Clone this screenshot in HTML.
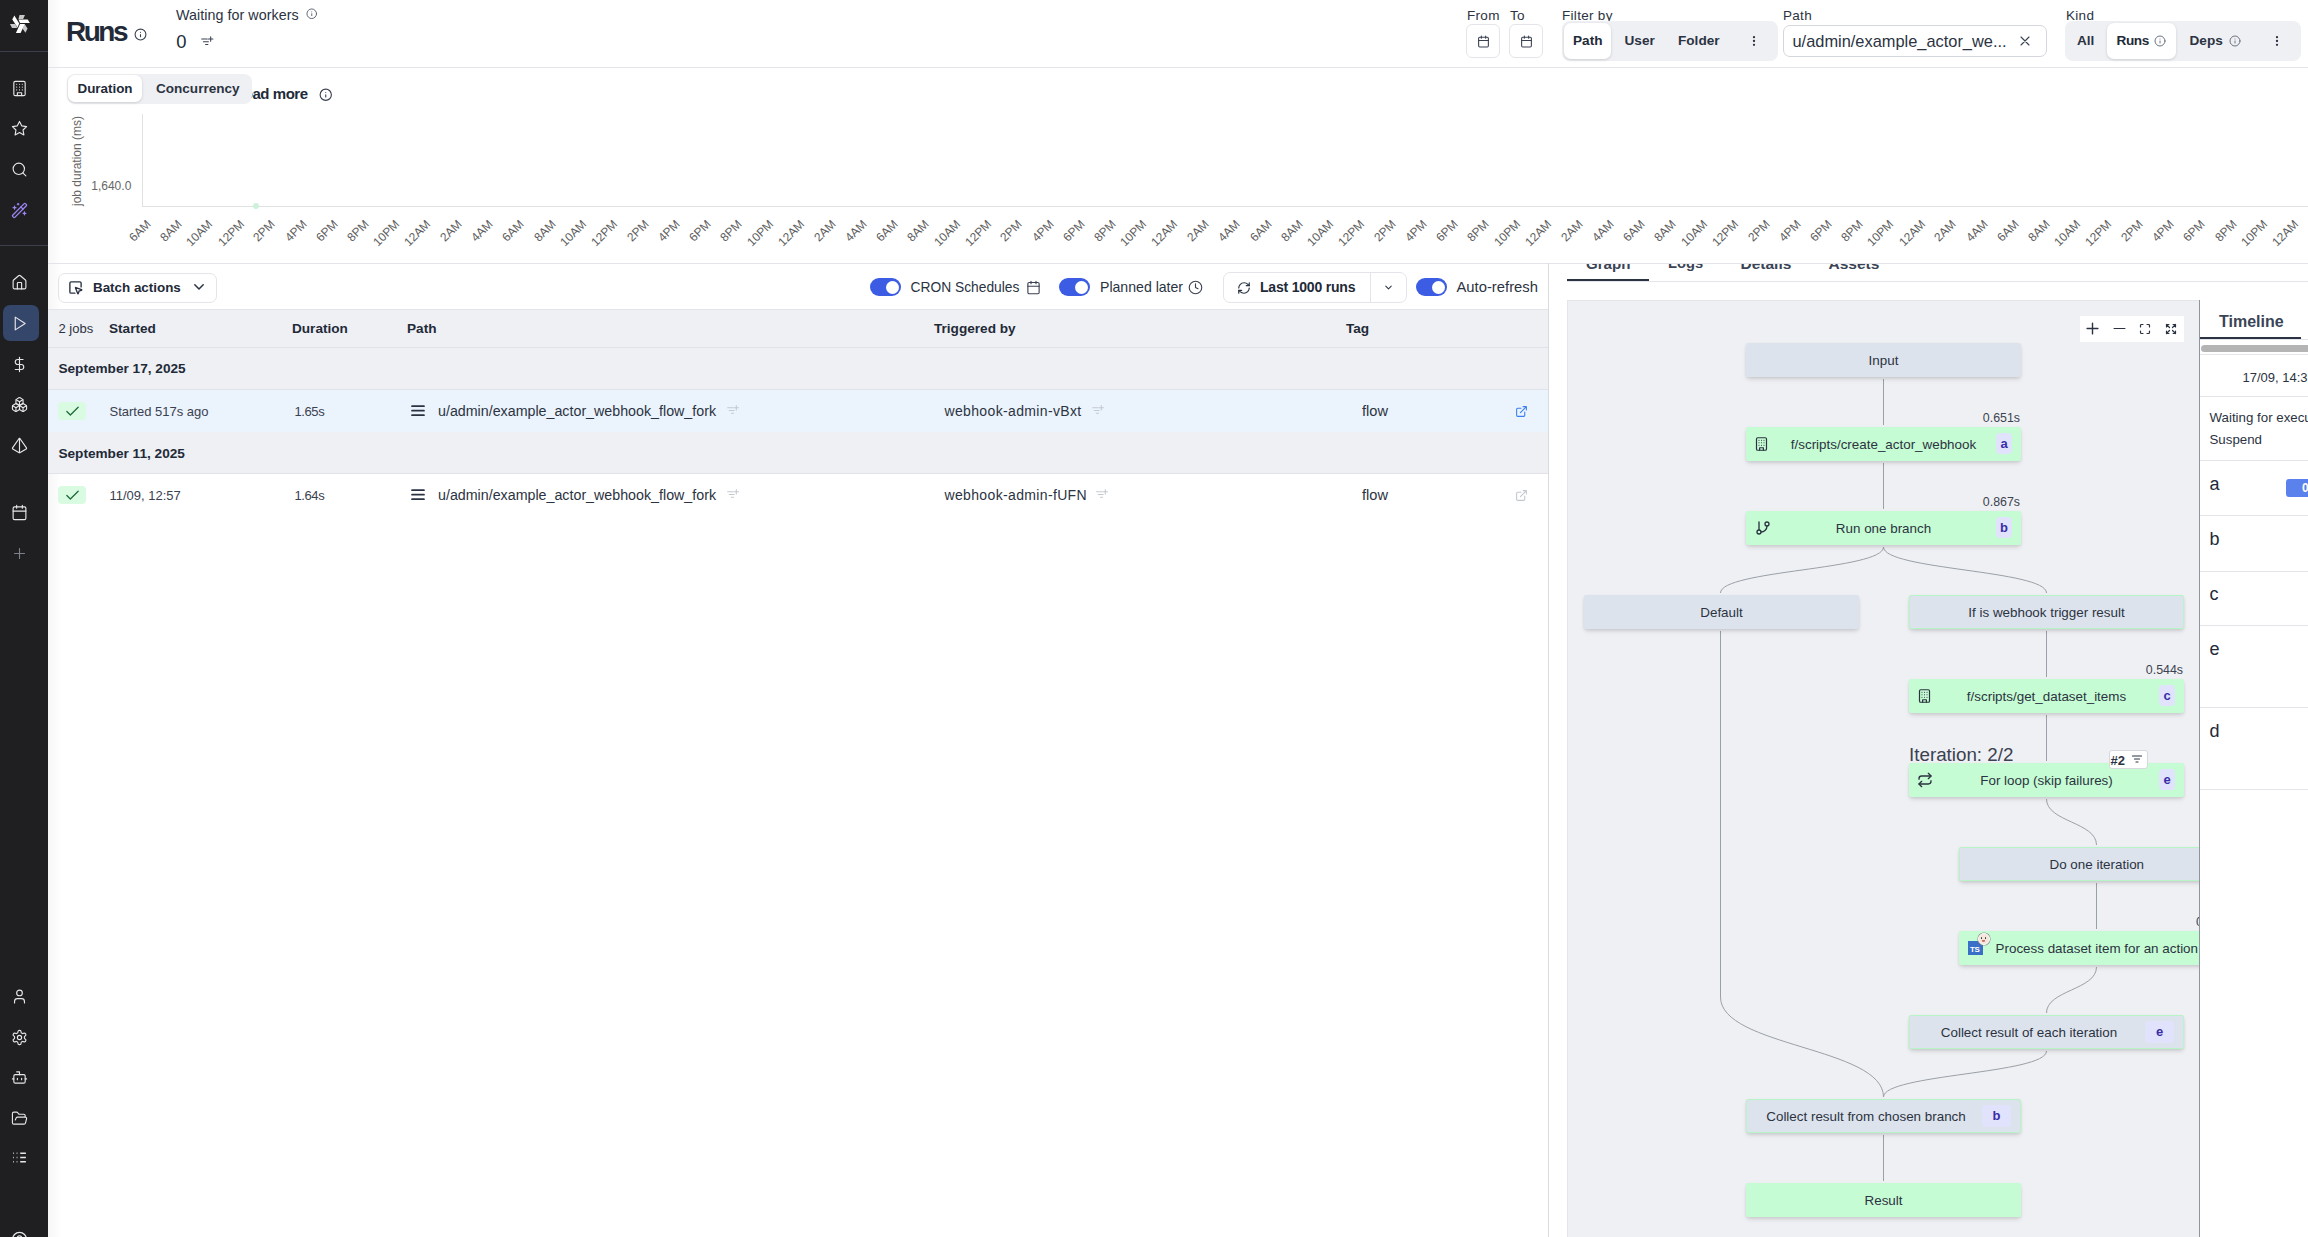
<!DOCTYPE html>
<html><head><meta charset="utf-8">
<style>
*{box-sizing:border-box;margin:0;padding:0}
html,body{width:2308px;height:1237px;overflow:hidden;background:#fff;font-family:"Liberation Sans",sans-serif;color:#2b3342}
.a{position:absolute}
.t{position:absolute;white-space:nowrap;line-height:1}
.b{font-weight:bold}
svg{display:block;overflow:visible}
.ic{position:absolute;fill:none;stroke:currentColor;stroke-width:2;stroke-linecap:round;stroke-linejoin:round}
.sbic{color:#e6e7ea}
.node{position:absolute;height:34px;width:275px;border-radius:2px;box-shadow:0 3px 5px -1px rgba(0,0,0,.13),0 1px 3px rgba(0,0,0,.07);font-size:13.4px;color:#2b3342;line-height:35px;text-align:center;white-space:nowrap;overflow:hidden}
.ng{background:#c6fcd3}
.ny{background:#dde3ec}
.nb{border:1px solid #b8f5c6;line-height:33px}
.badge{position:absolute;top:6px;width:16px;height:21px;border-radius:4px;background:#e1e3fc;color:#3a2ea6;font-weight:bold;font-size:13px;line-height:21px;text-align:center}
.dur{position:absolute;font-size:13px;color:#3c4350;white-space:nowrap;line-height:1}
.edge{fill:none;stroke:#9aa0a8;stroke-width:1}
</style></head><body>
<!-- SIDEBAR -->
<div class="a" style="left:0;top:0;width:48px;height:1237px;background:#1f1f21"></div>
<div class="a" style="left:48px;top:0;width:14px;height:1237px;background:linear-gradient(90deg,rgba(0,0,0,.035),rgba(0,0,0,0))"></div>
<svg class="a" style="left:4px;top:6px" width="32" height="32" viewBox="0 0 1237 1237">
<polygon fill="#fff" points="320,520 400,370 590,680 520,830"/>
<polygon fill="#c8c8c8" points="600,350 810,350 740,500 560,500"/>
<polygon fill="#fff" points="560,520 920,520 1000,660 620,660"/>
<polygon fill="#c8c8c8" points="800,700 910,870 830,1030 720,880"/>
<polygon fill="#fff" points="620,700 810,700 640,1040 460,1040"/>
<polygon fill="#c8c8c8" points="230,700 430,700 520,850 310,850"/>
</svg>
<div class="a" style="left:0;top:51px;width:48px;height:1px;background:#3b3f4c"></div>
<div class="a" style="left:0;top:245px;width:48px;height:1px;background:#3b3f4c"></div>
<div class="a" style="left:3px;top:305px;width:36px;height:36px;border-radius:7px;background:#34466a"></div>
<!-- building -->
<svg class="ic sbic" style="left:10.8px;top:79.5px;stroke-width:1.6" width="17" height="17" viewBox="0 0 24 24"><rect width="16" height="20" x="4" y="2" rx="2"/><path d="M9 22v-4h6v4"/><path d="M8 6h.01M16 6h.01M12 6h.01M12 10h.01M12 14h.01M16 10h.01M16 14h.01M8 10h.01M8 14h.01"/></svg>
<!-- star -->
<svg class="ic sbic" style="left:10.8px;top:119.5px;stroke-width:1.6" width="17" height="17" viewBox="0 0 24 24"><polygon points="12 2 15.09 8.26 22 9.27 17 14.14 18.18 21.02 12 17.77 5.82 21.02 7 14.14 2 9.27 8.91 8.26 12 2"/></svg>
<!-- search -->
<svg class="ic sbic" style="left:10.8px;top:160.5px;stroke-width:1.6" width="17" height="17" viewBox="0 0 24 24"><circle cx="11" cy="11" r="8"/><path d="m21 21-4.3-4.3"/></svg>
<!-- wand -->
<svg class="ic" style="left:10.8px;top:201.5px;stroke-width:1.8;color:#9d85f5" width="17" height="17" viewBox="0 0 24 24"><path d="m21.64 3.64-1.28-1.28a1.21 1.21 0 0 0-1.72 0L2.36 18.64a1.21 1.21 0 0 0 0 1.72l1.28 1.28a1.2 1.2 0 0 0 1.72 0L21.64 5.36a1.2 1.2 0 0 0 0-1.72"/><path d="m14 7 3 3"/><path d="M5 6v4M19 14v4M10 2v2M7 8H3M21 16h-4M11 3H9"/></svg>
<!-- home -->
<svg class="ic sbic" style="left:10.8px;top:273.5px;stroke-width:1.6" width="17" height="17" viewBox="0 0 24 24"><path d="M15 21v-8a1 1 0 0 0-1-1h-4a1 1 0 0 0-1 1v8"/><path d="M3 10a2 2 0 0 1 .709-1.528l7-5.999a2 2 0 0 1 2.582 0l7 5.999A2 2 0 0 1 21 10v9a2 2 0 0 1-2 2H5a2 2 0 0 1-2-2z"/></svg>
<!-- play -->
<svg class="ic sbic" style="left:10.8px;top:314.5px;stroke-width:1.6" width="17" height="17" viewBox="0 0 24 24"><polygon points="6 3 20 12 6 21 6 3"/></svg>
<!-- dollar -->
<svg class="ic sbic" style="left:10.8px;top:355.5px;stroke-width:1.6" width="17" height="17" viewBox="0 0 24 24"><line x1="12" x2="12" y1="2" y2="22"/><path d="M17 5H9.5a3.5 3.5 0 0 0 0 7h5a3.5 3.5 0 0 1 0 7H6"/></svg>
<!-- boxes -->
<svg class="ic sbic" style="left:10.8px;top:395.5px;stroke-width:1.6" width="17" height="17" viewBox="0 0 24 24"><path d="M2.97 12.92A2 2 0 0 0 2 14.63v3.24a2 2 0 0 0 .97 1.71l3 1.8a2 2 0 0 0 2.06 0L12 19v-5.5l-5-3-4.03 2.42Z"/><path d="m7 16.5-4.74-2.85M7 16.5l5-3M7 16.5v5.17"/><path d="M12 13.5V19l3.97 2.38a2 2 0 0 0 2.06 0l3-1.8a2 2 0 0 0 .97-1.71v-3.24a2 2 0 0 0-.97-1.71L17 10.5l-5 3Z"/><path d="m17 16.5-5-3M17 16.5l4.74-2.85M17 16.5v5.17"/><path d="M7.97 4.42A2 2 0 0 0 7 6.13v4.37l5 3 5-3V6.13a2 2 0 0 0-.97-1.71l-3-1.8a2 2 0 0 0-2.06 0l-3 1.8Z"/><path d="M12 8 7.26 5.15M12 8l4.74-2.85M12 13.5V8"/></svg>
<!-- pyramid -->
<svg class="ic sbic" style="left:10.8px;top:436.5px;stroke-width:1.6" width="17" height="17" viewBox="0 0 24 24"><path d="M2.5 16.88a1 1 0 0 1-.32-1.43l9-13.02a1 1 0 0 1 1.64 0l9 13.01a1 1 0 0 1-.32 1.44l-8.51 4.86a2 2 0 0 1-1.98 0Z"/><path d="M12 2v20"/></svg>
<!-- calendar -->
<svg class="ic sbic" style="left:10.8px;top:503.5px;stroke-width:1.6" width="17" height="17" viewBox="0 0 24 24"><path d="M8 2v4M16 2v4"/><rect width="18" height="18" x="3" y="4" rx="2"/><path d="M3 10h18"/></svg>
<!-- plus -->
<svg class="ic" style="left:10.8px;top:544.5px;stroke-width:1.6;color:#7d808a" width="17" height="17" viewBox="0 0 24 24"><path d="M5 12h14M12 5v14"/></svg>
<!-- user -->
<svg class="ic sbic" style="left:10.8px;top:987.5px;stroke-width:1.6" width="17" height="17" viewBox="0 0 24 24"><path d="M19 21v-2a4 4 0 0 0-4-4H9a4 4 0 0 0-4 4v2"/><circle cx="12" cy="7" r="4"/></svg>
<!-- settings -->
<svg class="ic sbic" style="left:10.8px;top:1028.5px;stroke-width:1.6" width="17" height="17" viewBox="0 0 24 24"><path d="M12.22 2h-.44a2 2 0 0 0-2 2v.18a2 2 0 0 1-1 1.73l-.43.25a2 2 0 0 1-2 0l-.15-.08a2 2 0 0 0-2.73.73l-.22.38a2 2 0 0 0 .73 2.730l.15.1a2 2 0 0 1 1 1.72v.51a2 2 0 0 1-1 1.74l-.15.09a2 2 0 0 0-.73 2.73l.22.38a2 2 0 0 0 2.73.73l.15-.08a2 2 0 0 1 2 0l.43.25a2 2 0 0 1 1 1.73V20a2 2 0 0 0 2 2h.44a2 2 0 0 0 2-2v-.18a2 2 0 0 1 1-1.73l.43-.25a2 2 0 0 1 2 0l.15.08a2 2 0 0 0 2.73-.73l.22-.39a2 2 0 0 0-.73-2.73l-.15-.08a2 2 0 0 1-1-1.74v-.5a2 2 0 0 1 1-1.74l.15-.09a2 2 0 0 0 .73-2.73l-.22-.38a2 2 0 0 0-2.73-.73l-.15.08a2 2 0 0 1-2 0l-.43-.25a2 2 0 0 1-1-1.73V4a2 2 0 0 0-2-2z"/><circle cx="12" cy="12" r="3"/></svg>
<!-- bot -->
<svg class="ic sbic" style="left:10.8px;top:1068.5px;stroke-width:1.6" width="17" height="17" viewBox="0 0 24 24"><path d="M12 8V4H8"/><rect width="16" height="12" x="4" y="8" rx="2"/><path d="M2 14h2M20 14h2M15 13v2M9 13v2"/></svg>
<!-- folder open -->
<svg class="ic sbic" style="left:10.8px;top:1109.5px;stroke-width:1.6" width="17" height="17" viewBox="0 0 24 24"><path d="m6 14 1.5-2.9A2 2 0 0 1 9.24 10H20a2 2 0 0 1 1.94 2.5l-1.54 6a2 2 0 0 1-1.95 1.5H4a2 2 0 0 1-2-2V5a2 2 0 0 1 2-2h3.9a2 2 0 0 1 1.69.9l.81 1.2a2 2 0 0 0 1.67.9H18a2 2 0 0 1 2 2v2"/></svg>
<!-- list -->
<svg class="ic sbic" style="left:10.8px;top:1149px;stroke-width:2.2;stroke-linecap:butt" width="17" height="17" viewBox="0 0 24 24"><path d="M13 12h8M13 18h8M13 6h8M3 12h1M3 18h1M3 6h1M8 12h1M8 18h1M8 6h1"/></svg>
<!-- partial circle bottom -->
<svg class="ic sbic" style="left:10.8px;top:1230.5px;stroke-width:1.8" width="17" height="17" viewBox="0 0 24 24"><circle cx="12" cy="12" r="10"/><circle cx="12" cy="10" r="3"/></svg>
<!-- HEADER -->
<div class="t b" style="left:66px;top:18px;font-size:28px;letter-spacing:-2.5px;color:#222a38">Runs</div>
<svg class="ic" style="left:133.5px;top:27.5px;stroke-width:2;color:#3a4150" width="13" height="13" viewBox="0 0 24 24"><circle cx="12" cy="12" r="10"/><path d="M12 16v-4M12 8h.01"/></svg>
<div class="t" style="left:176px;top:7.6px;font-size:14.3px;letter-spacing:0.05px;color:#2b3342">Waiting for workers</div>
<svg class="ic" style="left:306px;top:8px;stroke-width:2;color:#5b6270" width="11.5" height="11.5" viewBox="0 0 24 24"><circle cx="12" cy="12" r="10"/><path d="M12 16v-4M12 8h.01"/></svg>
<div class="t" style="left:176.2px;top:33.3px;font-size:18.4px;color:#222a38">0</div>
<svg class="ic" style="left:200.3px;top:35.2px;stroke-width:1.9;color:#3a4150" width="13.5" height="13.5" viewBox="0 0 24 24"><path d="M3 7h10M6 12h9M10 17h4M19 3v8M15 7h8"/></svg>
<div class="a" style="left:48px;top:67px;width:2260px;height:1px;background:#e3e5ea"></div>

<!-- right header -->
<div class="t" style="left:1467px;top:8.5px;font-size:13.5px;letter-spacing:.3px">From</div>
<div class="t" style="left:1510px;top:8.5px;font-size:13.5px;letter-spacing:.3px">To</div>
<div class="a" style="left:1466px;top:24px;width:34px;height:34px;border:1px solid #e3e5ea;border-radius:6px"></div>
<div class="a" style="left:1509px;top:24px;width:34px;height:34px;border:1px solid #e3e5ea;border-radius:6px"></div>
<svg class="ic" style="left:1476.5px;top:34.5px;stroke-width:2;color:#3a4150" width="13" height="13" viewBox="0 0 24 24"><path d="M8 2v4M16 2v4"/><rect width="18" height="18" x="3" y="4" rx="2"/><path d="M3 10h18"/></svg>
<svg class="ic" style="left:1519.5px;top:34.5px;stroke-width:2;color:#3a4150" width="13" height="13" viewBox="0 0 24 24"><path d="M8 2v4M16 2v4"/><rect width="18" height="18" x="3" y="4" rx="2"/><path d="M3 10h18"/></svg>

<div class="t" style="left:1562px;top:8.5px;font-size:13.5px;letter-spacing:.3px">Filter by</div>
<div class="a" style="left:1561.5px;top:21px;width:216px;height:40px;border-radius:8px;background:#eff0f4"></div>
<div class="a" style="left:1564px;top:23px;width:47px;height:36px;border-radius:7px;background:#fff;box-shadow:0 1px 3px rgba(0,0,0,.15)"></div>
<div class="t b" style="left:1573px;top:34.3px;font-size:13.6px;color:#222a38">Path</div>
<div class="t b" style="left:1624.5px;top:34.3px;font-size:13.6px;color:#2b3342">User</div>
<div class="t b" style="left:1678px;top:34.3px;font-size:13.6px;color:#2b3342">Folder</div>
<svg class="a" style="left:1751px;top:36px" width="6" height="10" viewBox="0 0 6 10"><circle cx="3" cy="1.2" r="1.15" fill="#2b3342"/><circle cx="3" cy="5" r="1.15" fill="#2b3342"/><circle cx="3" cy="8.8" r="1.15" fill="#2b3342"/></svg>

<div class="t" style="left:1783px;top:8.5px;font-size:13.5px;letter-spacing:.3px">Path</div>
<div class="a" style="left:1782.5px;top:25px;width:264px;height:32px;border:1px solid #d3d6dc;border-radius:7px;background:#fff"></div>
<div class="t" style="left:1792.5px;top:32.6px;font-size:16.4px;color:#2b3342">u/admin/example_actor_we...</div>
<svg class="ic" style="left:2019px;top:35px;stroke-width:2.2;color:#3a4150" width="12" height="12" viewBox="0 0 24 24"><path d="M20 4 4 20M4 4l16 16"/></svg>

<div class="t" style="left:2066px;top:8.5px;font-size:13.5px;letter-spacing:.3px">Kind</div>
<div class="a" style="left:2065px;top:21px;width:236px;height:40px;border-radius:8px;background:#eff0f4"></div>
<div class="a" style="left:2107px;top:23px;width:69px;height:36px;border-radius:7px;background:#fff;box-shadow:0 1px 3px rgba(0,0,0,.15)"></div>
<div class="t b" style="left:2077px;top:34.3px;font-size:13.6px;color:#2b3342">All</div>
<div class="t b" style="left:2116.5px;top:34.3px;font-size:13.6px;letter-spacing:-.4px;color:#222a38">Runs</div>
<svg class="ic" style="left:2153.5px;top:35px;stroke-width:2;color:#6b7280" width="12" height="12" viewBox="0 0 24 24"><circle cx="12" cy="12" r="10"/><path d="M12 16v-4M12 8h.01"/></svg>
<div class="t b" style="left:2189.5px;top:34.3px;font-size:13.6px;color:#2b3342">Deps</div>
<svg class="ic" style="left:2228.5px;top:35px;stroke-width:2;color:#6b7280" width="12" height="12" viewBox="0 0 24 24"><circle cx="12" cy="12" r="10"/><path d="M12 16v-4M12 8h.01"/></svg>
<svg class="a" style="left:2274px;top:36px" width="6" height="10" viewBox="0 0 6 10"><circle cx="3" cy="1.2" r="1.15" fill="#2b3342"/><circle cx="3" cy="5" r="1.15" fill="#2b3342"/><circle cx="3" cy="8.8" r="1.15" fill="#2b3342"/></svg>
<!-- CHART -->
<div class="t b" style="left:235px;top:86.3px;font-size:15px;letter-spacing:-.45px;color:#222a38">Load more</div>
<svg class="ic" style="left:319px;top:87.5px;stroke-width:2;color:#3a4150" width="13.5" height="13.5" viewBox="0 0 24 24"><circle cx="12" cy="12" r="10"/><path d="M12 16v-4M12 8h.01"/></svg>
<div class="a" style="left:66.5px;top:73.5px;width:185.5px;height:30.5px;border-radius:8px;background:#eff0f4"></div>
<div class="a" style="left:67.7px;top:75px;width:74px;height:27px;border-radius:7px;background:#fff;box-shadow:0 1px 3px rgba(0,0,0,.15)"></div>
<div class="t b" style="left:77.5px;top:81.8px;font-size:13.4px;color:#222a38">Duration</div>
<div class="t b" style="left:156px;top:81.6px;font-size:13.55px;color:#2b3342">Concurrency</div>
<div class="t" style="left:77px;top:160.5px;font-size:12px;color:#666;transform:translate(-50%,-50%) rotate(-90deg)">job duration (ms)</div>
<div class="t" style="right:2176.7px;top:180.2px;font-size:12px;color:#666">1,640.0</div>
<div class="a" style="left:142px;top:114px;width:1px;height:93px;background:#e1e1e1"></div>
<div class="a" style="left:142px;top:206px;width:2166px;height:1px;background:#e1e1e1"></div>
<div class="a" style="left:252.8px;top:203.4px;width:6px;height:6px;border-radius:50%;background:#cdf2da"></div>
<div class="t" style="right:2159.5px;top:216px;font-size:12px;color:#5e5e5e;transform-origin:100% 50%;transform:rotate(-45deg)">6AM</div>
<div class="t" style="right:2128.4px;top:216px;font-size:12px;color:#5e5e5e;transform-origin:100% 50%;transform:rotate(-45deg)">8AM</div>
<div class="t" style="right:2097.2px;top:216px;font-size:12px;color:#5e5e5e;transform-origin:100% 50%;transform:rotate(-45deg)">10AM</div>
<div class="t" style="right:2066.1px;top:216px;font-size:12px;color:#5e5e5e;transform-origin:100% 50%;transform:rotate(-45deg)">12PM</div>
<div class="t" style="right:2035.0px;top:216px;font-size:12px;color:#5e5e5e;transform-origin:100% 50%;transform:rotate(-45deg)">2PM</div>
<div class="t" style="right:2003.8px;top:216px;font-size:12px;color:#5e5e5e;transform-origin:100% 50%;transform:rotate(-45deg)">4PM</div>
<div class="t" style="right:1972.7px;top:216px;font-size:12px;color:#5e5e5e;transform-origin:100% 50%;transform:rotate(-45deg)">6PM</div>
<div class="t" style="right:1941.6px;top:216px;font-size:12px;color:#5e5e5e;transform-origin:100% 50%;transform:rotate(-45deg)">8PM</div>
<div class="t" style="right:1910.5px;top:216px;font-size:12px;color:#5e5e5e;transform-origin:100% 50%;transform:rotate(-45deg)">10PM</div>
<div class="t" style="right:1879.3px;top:216px;font-size:12px;color:#5e5e5e;transform-origin:100% 50%;transform:rotate(-45deg)">12AM</div>
<div class="t" style="right:1848.2px;top:216px;font-size:12px;color:#5e5e5e;transform-origin:100% 50%;transform:rotate(-45deg)">2AM</div>
<div class="t" style="right:1817.1px;top:216px;font-size:12px;color:#5e5e5e;transform-origin:100% 50%;transform:rotate(-45deg)">4AM</div>
<div class="t" style="right:1785.9px;top:216px;font-size:12px;color:#5e5e5e;transform-origin:100% 50%;transform:rotate(-45deg)">6AM</div>
<div class="t" style="right:1754.8px;top:216px;font-size:12px;color:#5e5e5e;transform-origin:100% 50%;transform:rotate(-45deg)">8AM</div>
<div class="t" style="right:1723.7px;top:216px;font-size:12px;color:#5e5e5e;transform-origin:100% 50%;transform:rotate(-45deg)">10AM</div>
<div class="t" style="right:1692.5px;top:216px;font-size:12px;color:#5e5e5e;transform-origin:100% 50%;transform:rotate(-45deg)">12PM</div>
<div class="t" style="right:1661.4px;top:216px;font-size:12px;color:#5e5e5e;transform-origin:100% 50%;transform:rotate(-45deg)">2PM</div>
<div class="t" style="right:1630.3px;top:216px;font-size:12px;color:#5e5e5e;transform-origin:100% 50%;transform:rotate(-45deg)">4PM</div>
<div class="t" style="right:1599.2px;top:216px;font-size:12px;color:#5e5e5e;transform-origin:100% 50%;transform:rotate(-45deg)">6PM</div>
<div class="t" style="right:1568.0px;top:216px;font-size:12px;color:#5e5e5e;transform-origin:100% 50%;transform:rotate(-45deg)">8PM</div>
<div class="t" style="right:1536.9px;top:216px;font-size:12px;color:#5e5e5e;transform-origin:100% 50%;transform:rotate(-45deg)">10PM</div>
<div class="t" style="right:1505.8px;top:216px;font-size:12px;color:#5e5e5e;transform-origin:100% 50%;transform:rotate(-45deg)">12AM</div>
<div class="t" style="right:1474.6px;top:216px;font-size:12px;color:#5e5e5e;transform-origin:100% 50%;transform:rotate(-45deg)">2AM</div>
<div class="t" style="right:1443.5px;top:216px;font-size:12px;color:#5e5e5e;transform-origin:100% 50%;transform:rotate(-45deg)">4AM</div>
<div class="t" style="right:1412.4px;top:216px;font-size:12px;color:#5e5e5e;transform-origin:100% 50%;transform:rotate(-45deg)">6AM</div>
<div class="t" style="right:1381.3px;top:216px;font-size:12px;color:#5e5e5e;transform-origin:100% 50%;transform:rotate(-45deg)">8AM</div>
<div class="t" style="right:1350.1px;top:216px;font-size:12px;color:#5e5e5e;transform-origin:100% 50%;transform:rotate(-45deg)">10AM</div>
<div class="t" style="right:1319.0px;top:216px;font-size:12px;color:#5e5e5e;transform-origin:100% 50%;transform:rotate(-45deg)">12PM</div>
<div class="t" style="right:1287.9px;top:216px;font-size:12px;color:#5e5e5e;transform-origin:100% 50%;transform:rotate(-45deg)">2PM</div>
<div class="t" style="right:1256.7px;top:216px;font-size:12px;color:#5e5e5e;transform-origin:100% 50%;transform:rotate(-45deg)">4PM</div>
<div class="t" style="right:1225.6px;top:216px;font-size:12px;color:#5e5e5e;transform-origin:100% 50%;transform:rotate(-45deg)">6PM</div>
<div class="t" style="right:1194.5px;top:216px;font-size:12px;color:#5e5e5e;transform-origin:100% 50%;transform:rotate(-45deg)">8PM</div>
<div class="t" style="right:1163.3px;top:216px;font-size:12px;color:#5e5e5e;transform-origin:100% 50%;transform:rotate(-45deg)">10PM</div>
<div class="t" style="right:1132.2px;top:216px;font-size:12px;color:#5e5e5e;transform-origin:100% 50%;transform:rotate(-45deg)">12AM</div>
<div class="t" style="right:1101.1px;top:216px;font-size:12px;color:#5e5e5e;transform-origin:100% 50%;transform:rotate(-45deg)">2AM</div>
<div class="t" style="right:1070.0px;top:216px;font-size:12px;color:#5e5e5e;transform-origin:100% 50%;transform:rotate(-45deg)">4AM</div>
<div class="t" style="right:1038.8px;top:216px;font-size:12px;color:#5e5e5e;transform-origin:100% 50%;transform:rotate(-45deg)">6AM</div>
<div class="t" style="right:1007.7px;top:216px;font-size:12px;color:#5e5e5e;transform-origin:100% 50%;transform:rotate(-45deg)">8AM</div>
<div class="t" style="right:976.6px;top:216px;font-size:12px;color:#5e5e5e;transform-origin:100% 50%;transform:rotate(-45deg)">10AM</div>
<div class="t" style="right:945.4px;top:216px;font-size:12px;color:#5e5e5e;transform-origin:100% 50%;transform:rotate(-45deg)">12PM</div>
<div class="t" style="right:914.3px;top:216px;font-size:12px;color:#5e5e5e;transform-origin:100% 50%;transform:rotate(-45deg)">2PM</div>
<div class="t" style="right:883.2px;top:216px;font-size:12px;color:#5e5e5e;transform-origin:100% 50%;transform:rotate(-45deg)">4PM</div>
<div class="t" style="right:852.0px;top:216px;font-size:12px;color:#5e5e5e;transform-origin:100% 50%;transform:rotate(-45deg)">6PM</div>
<div class="t" style="right:820.9px;top:216px;font-size:12px;color:#5e5e5e;transform-origin:100% 50%;transform:rotate(-45deg)">8PM</div>
<div class="t" style="right:789.8px;top:216px;font-size:12px;color:#5e5e5e;transform-origin:100% 50%;transform:rotate(-45deg)">10PM</div>
<div class="t" style="right:758.7px;top:216px;font-size:12px;color:#5e5e5e;transform-origin:100% 50%;transform:rotate(-45deg)">12AM</div>
<div class="t" style="right:727.5px;top:216px;font-size:12px;color:#5e5e5e;transform-origin:100% 50%;transform:rotate(-45deg)">2AM</div>
<div class="t" style="right:696.4px;top:216px;font-size:12px;color:#5e5e5e;transform-origin:100% 50%;transform:rotate(-45deg)">4AM</div>
<div class="t" style="right:665.3px;top:216px;font-size:12px;color:#5e5e5e;transform-origin:100% 50%;transform:rotate(-45deg)">6AM</div>
<div class="t" style="right:634.1px;top:216px;font-size:12px;color:#5e5e5e;transform-origin:100% 50%;transform:rotate(-45deg)">8AM</div>
<div class="t" style="right:603.0px;top:216px;font-size:12px;color:#5e5e5e;transform-origin:100% 50%;transform:rotate(-45deg)">10AM</div>
<div class="t" style="right:571.9px;top:216px;font-size:12px;color:#5e5e5e;transform-origin:100% 50%;transform:rotate(-45deg)">12PM</div>
<div class="t" style="right:540.7px;top:216px;font-size:12px;color:#5e5e5e;transform-origin:100% 50%;transform:rotate(-45deg)">2PM</div>
<div class="t" style="right:509.6px;top:216px;font-size:12px;color:#5e5e5e;transform-origin:100% 50%;transform:rotate(-45deg)">4PM</div>
<div class="t" style="right:478.5px;top:216px;font-size:12px;color:#5e5e5e;transform-origin:100% 50%;transform:rotate(-45deg)">6PM</div>
<div class="t" style="right:447.4px;top:216px;font-size:12px;color:#5e5e5e;transform-origin:100% 50%;transform:rotate(-45deg)">8PM</div>
<div class="t" style="right:416.2px;top:216px;font-size:12px;color:#5e5e5e;transform-origin:100% 50%;transform:rotate(-45deg)">10PM</div>
<div class="t" style="right:385.1px;top:216px;font-size:12px;color:#5e5e5e;transform-origin:100% 50%;transform:rotate(-45deg)">12AM</div>
<div class="t" style="right:354.0px;top:216px;font-size:12px;color:#5e5e5e;transform-origin:100% 50%;transform:rotate(-45deg)">2AM</div>
<div class="t" style="right:322.8px;top:216px;font-size:12px;color:#5e5e5e;transform-origin:100% 50%;transform:rotate(-45deg)">4AM</div>
<div class="t" style="right:291.7px;top:216px;font-size:12px;color:#5e5e5e;transform-origin:100% 50%;transform:rotate(-45deg)">6AM</div>
<div class="t" style="right:260.6px;top:216px;font-size:12px;color:#5e5e5e;transform-origin:100% 50%;transform:rotate(-45deg)">8AM</div>
<div class="t" style="right:229.4px;top:216px;font-size:12px;color:#5e5e5e;transform-origin:100% 50%;transform:rotate(-45deg)">10AM</div>
<div class="t" style="right:198.3px;top:216px;font-size:12px;color:#5e5e5e;transform-origin:100% 50%;transform:rotate(-45deg)">12PM</div>
<div class="t" style="right:167.2px;top:216px;font-size:12px;color:#5e5e5e;transform-origin:100% 50%;transform:rotate(-45deg)">2PM</div>
<div class="t" style="right:136.1px;top:216px;font-size:12px;color:#5e5e5e;transform-origin:100% 50%;transform:rotate(-45deg)">4PM</div>
<div class="t" style="right:104.9px;top:216px;font-size:12px;color:#5e5e5e;transform-origin:100% 50%;transform:rotate(-45deg)">6PM</div>
<div class="t" style="right:73.8px;top:216px;font-size:12px;color:#5e5e5e;transform-origin:100% 50%;transform:rotate(-45deg)">8PM</div>
<div class="t" style="right:42.7px;top:216px;font-size:12px;color:#5e5e5e;transform-origin:100% 50%;transform:rotate(-45deg)">10PM</div>
<div class="t" style="right:11.5px;top:216px;font-size:12px;color:#5e5e5e;transform-origin:100% 50%;transform:rotate(-45deg)">12AM</div>
<div class="a" style="left:48px;top:263px;width:2260px;height:1px;background:#e3e5ea"></div>
<!-- TABLE PANEL -->
<div class="a" style="left:57.5px;top:272.5px;width:159px;height:30px;border:1px solid #e3e5ea;border-radius:7px"></div>
<svg class="ic" style="left:67.5px;top:279.5px;stroke-width:2.2;color:#2b3342" width="15" height="15" viewBox="0 0 24 24"><path d="M12.034 12.681a.498.498 0 0 1 .647-.647l9 3.5a.5.5 0 0 1-.033.943l-3.444 1.068a1 1 0 0 0-.66.66l-1.067 3.443a.5.5 0 0 1-.943.033z"/><path d="M21 11V5a2 2 0 0 0-2-2H5a2 2 0 0 0-2 2v14a2 2 0 0 0 2 2h6"/></svg>
<div class="t b" style="left:93px;top:280.6px;font-size:13.4px;color:#222a38">Batch actions</div>
<svg class="a" style="left:194px;top:284px" width="10" height="6" viewBox="0 0 10 6"><path d="M.8.8 5 5 9.2.8" fill="none" stroke="#2b3342" stroke-width="1.5" stroke-linecap="round" stroke-linejoin="round"/></svg>

<div class="a" style="left:870px;top:278px;width:31px;height:18px;border-radius:9px;background:#3c5ce3"></div>
<div class="a" style="left:886px;top:280.5px;width:13px;height:13px;border-radius:50%;background:#fff"></div>
<div class="t" style="left:910.5px;top:280.5px;font-size:13.8px;color:#2b3342">CRON Schedules</div>
<svg class="ic" style="left:1025.5px;top:279.5px;stroke-width:1.8;color:#3a4150" width="15" height="15" viewBox="0 0 24 24"><path d="M8 2v4M16 2v4"/><rect width="18" height="18" x="3" y="4" rx="2"/><path d="M3 10h18"/></svg>
<div class="a" style="left:1059px;top:278px;width:31px;height:18px;border-radius:9px;background:#3c5ce3"></div>
<div class="a" style="left:1075px;top:280.5px;width:13px;height:13px;border-radius:50%;background:#fff"></div>
<div class="t" style="left:1100px;top:279.8px;font-size:14.1px;color:#2b3342">Planned later</div>
<svg class="ic" style="left:1188px;top:279.5px;stroke-width:1.8;color:#3a4150" width="15" height="15" viewBox="0 0 24 24"><circle cx="12" cy="12" r="10"/><path d="M12 6v6l4 2"/></svg>

<div class="a" style="left:1222.5px;top:272px;width:184px;height:31px;border:1px solid #e3e5ea;border-radius:7px"></div>
<div class="a" style="left:1370px;top:272px;width:1px;height:31px;background:#e3e5ea"></div>
<svg class="ic" style="left:1237px;top:280.5px;stroke-width:2;color:#2b3342" width="14" height="14" viewBox="0 0 24 24"><path d="M3 12a9 9 0 0 1 9-9 9.75 9.75 0 0 1 6.74 2.74L21 8"/><path d="M21 3v5h-5"/><path d="M21 12a9 9 0 0 1-9 9 9.75 9.75 0 0 1-6.74-2.74L3 16"/><path d="M8 16H3v5"/></svg>
<div class="t b" style="left:1260px;top:280px;font-size:14px;letter-spacing:-.2px;color:#222a38">Last 1000 runs</div>
<svg class="ic" style="left:1382.5px;top:281.5px;stroke-width:2.2;color:#2b3342" width="11" height="11" viewBox="0 0 24 24"><path d="m6 9 6 6 6-6"/></svg>

<div class="a" style="left:1416px;top:278px;width:31px;height:18px;border-radius:9px;background:#3c5ce3"></div>
<div class="a" style="left:1432px;top:280.5px;width:13px;height:13px;border-radius:50%;background:#fff"></div>
<div class="t" style="left:1456.5px;top:279.8px;font-size:14.8px;color:#2b3342">Auto-refresh</div>

<!-- table header -->
<div class="a" style="left:48px;top:309px;width:1500px;height:123px;background:#eff0f4"></div>
<div class="a" style="left:48px;top:309px;width:1500px;height:1px;background:#e3e5ea"></div>
<div class="a" style="left:48px;top:347px;width:1500px;height:1px;background:#e1e3e8"></div>
<div class="a" style="left:48px;top:389px;width:1500px;height:1px;background:#e1e3e8"></div>
<div class="a" style="left:48px;top:390px;width:1500px;height:42px;background:#ebf3fd"></div>
<div class="a" style="left:48px;top:432px;width:1500px;height:41px;background:#eff0f4"></div>
<div class="a" style="left:48px;top:473px;width:1500px;height:1px;background:#e1e3e8"></div>

<div class="t" style="left:58.5px;top:322px;font-size:13px;color:#2b3342">2 jobs</div>
<div class="t b" style="left:109px;top:321.8px;font-size:13.6px;color:#222a38">Started</div>
<div class="t b" style="left:292px;top:321.8px;font-size:13.6px;color:#222a38">Duration</div>
<div class="t b" style="left:407px;top:321.8px;font-size:13.6px;color:#222a38">Path</div>
<div class="t b" style="left:934px;top:321.8px;font-size:13.6px;color:#222a38">Triggered by</div>
<div class="t b" style="left:1346px;top:321.8px;font-size:13.6px;color:#222a38">Tag</div>

<div class="t b" style="left:58.4px;top:362.2px;font-size:13.64px;color:#222a38">September 17, 2025</div>
<div class="t b" style="left:58.4px;top:446.6px;font-size:13.64px;color:#222a38">September 11, 2025</div>

<!-- row 1 -->
<div class="a" style="left:58px;top:402px;width:28px;height:18px;border-radius:4px;background:#d9fbe2"></div>
<svg class="ic" style="left:63.5px;top:402.5px;stroke-width:1.8;color:#1f6b3a" width="17" height="17" viewBox="0 0 24 24"><path d="M20 6 9 17l-5-5"/></svg>
<div class="t" style="left:109.5px;top:405px;font-size:13px;color:#3a4150">Started 517s ago</div>
<div class="t" style="left:294.5px;top:405px;font-size:13px;letter-spacing:-.4px;color:#3a4150">1.65s</div>
<svg class="a" style="left:411px;top:405px" width="14" height="12" viewBox="0 0 14 12"><path d="M1 1.2h12M1 5.7h12M1 10.2h12" stroke="#2b3342" stroke-width="1.7" stroke-linecap="round"/></svg>
<div class="t" style="left:438px;top:404px;font-size:14.25px;color:#2b3342">u/admin/example_actor_webhook_flow_fork</div>
<svg class="ic" style="left:725.5px;top:404px;stroke-width:2;color:#c5c9d0" width="13" height="13" viewBox="0 0 24 24"><path d="M3 7h10M6 12h9M10 17h4M19 3v8M15 7h8"/></svg>
<div class="t" style="left:944.5px;top:404px;font-size:14px;letter-spacing:.35px;color:#2b3342">webhook-admin-vBxt</div>
<svg class="ic" style="left:1091px;top:404px;stroke-width:2;color:#c5c9d0" width="13" height="13" viewBox="0 0 24 24"><path d="M3 7h10M6 12h9M10 17h4M19 3v8M15 7h8"/></svg>
<div class="t" style="left:1362px;top:404px;font-size:14.6px;color:#2b3342">flow</div>
<svg class="ic" style="left:1515px;top:404.5px;stroke-width:2;color:#3b7ff0" width="13" height="13" viewBox="0 0 24 24"><path d="M15 3h6v6M10 14 21 3M18 13v6a2 2 0 0 1-2 2H5a2 2 0 0 1-2-2V8a2 2 0 0 1 2-2h6"/></svg>

<!-- row 2 -->
<div class="a" style="left:58px;top:486px;width:28px;height:18px;border-radius:4px;background:#d9fbe2"></div>
<svg class="ic" style="left:63.5px;top:486.5px;stroke-width:1.8;color:#1f6b3a" width="17" height="17" viewBox="0 0 24 24"><path d="M20 6 9 17l-5-5"/></svg>
<div class="t" style="left:109.5px;top:489px;font-size:13px;color:#3a4150">11/09, 12:57</div>
<div class="t" style="left:294.5px;top:489px;font-size:13px;letter-spacing:-.4px;color:#3a4150">1.64s</div>
<svg class="a" style="left:411px;top:489px" width="14" height="12" viewBox="0 0 14 12"><path d="M1 1.2h12M1 5.7h12M1 10.2h12" stroke="#2b3342" stroke-width="1.7" stroke-linecap="round"/></svg>
<div class="t" style="left:438px;top:488px;font-size:14.25px;color:#2b3342">u/admin/example_actor_webhook_flow_fork</div>
<svg class="ic" style="left:725.5px;top:488px;stroke-width:2;color:#c5c9d0" width="13" height="13" viewBox="0 0 24 24"><path d="M3 7h10M6 12h9M10 17h4M19 3v8M15 7h8"/></svg>
<div class="t" style="left:944.5px;top:488px;font-size:14px;letter-spacing:.35px;color:#2b3342">webhook-admin-fUFN</div>
<svg class="ic" style="left:1095px;top:488px;stroke-width:2;color:#c5c9d0" width="13" height="13" viewBox="0 0 24 24"><path d="M3 7h10M6 12h9M10 17h4M19 3v8M15 7h8"/></svg>
<div class="t" style="left:1362px;top:488px;font-size:14.6px;color:#2b3342">flow</div>
<svg class="ic" style="left:1515px;top:488.5px;stroke-width:2;color:#c3c7ce" width="13" height="13" viewBox="0 0 24 24"><path d="M15 3h6v6M10 14 21 3M18 13v6a2 2 0 0 1-2 2H5a2 2 0 0 1-2-2V8a2 2 0 0 1 2-2h6"/></svg>

<div class="a" style="left:1548px;top:263px;width:1px;height:974px;background:#d8dbe0"></div>
<!-- RIGHT PANEL -->
<div class="a" style="left:1549px;top:264px;width:759px;height:17px;overflow:hidden">
 <div class="t b" style="left:37px;top:-7.6px;font-size:15.1px;color:#3a4456">Graph</div>
 <div class="t b" style="left:119px;top:-7.6px;font-size:14.7px;color:#3a4456">Logs</div>
 <div class="t b" style="left:191.5px;top:-7.6px;font-size:15.5px;color:#3a4456">Details</div>
 <div class="t b" style="left:279.5px;top:-7.6px;font-size:15.5px;color:#3a4456">Assets</div>
</div>
<div class="a" style="left:1567px;top:278.5px;width:82px;height:2.5px;background:#2b3342"></div>
<div class="a" style="left:1567px;top:281px;width:741px;height:1px;background:#e3e5ea"></div>

<!-- graph canvas -->
<div class="a" style="left:1567px;top:300px;width:633px;height:937px;background:#eff0f4;border-top:1px solid #e3e5ea;border-left:1px solid #e3e5ea;overflow:hidden">
<svg class="a" style="left:-1568px;top:-301px" width="2308" height="1237">
 <path class="edge" d="M1883.5,379 V425 M1883.5,463 V509 M1883.5,547 C1883.5,570 1720.5,570 1720.5,593 M1883.5,547 C1883.5,570 2046.5,570 2046.5,593 M1720.5,631 V997 C1720.5,1047 1883.5,1047 1883.5,1097 M2046.5,631 V677 M2046.5,715 V761 M2046.5,799 C2046.5,822 2096.5,822 2096.5,845 M2096.5,883 V929 M2096.5,967 C2096.5,990 2046.5,990 2046.5,1013 M2046.5,1051 C2046.5,1074 1883.5,1074 1883.5,1097 M1883.5,1135 V1181"/>
</svg>
</div>
<div class="a" style="left:2080px;top:316px;width:104px;height:26px;background:#fff"></div>
<svg class="ic" style="left:2086px;top:322px;stroke-width:2.6;color:#2b3342" width="13" height="13" viewBox="0 0 24 24"><path d="M12 2v20M2 12h20"/></svg>
<svg class="ic" style="left:2112.5px;top:322px;stroke-width:2.2;color:#2b3342" width="13" height="13" viewBox="0 0 24 24"><path d="M2 12h20"/></svg>
<svg class="ic" style="left:2139px;top:323px;stroke-width:2.4;color:#2b3342" width="12" height="12" viewBox="0 0 24 24"><path d="M8 3H5a2 2 0 0 0-2 2v3M21 8V5a2 2 0 0 0-2-2h-3M3 16v3a2 2 0 0 0 2 2h3M16 21h3a2 2 0 0 0 2-2v-3"/></svg>
<svg class="ic" style="left:2165px;top:323px;stroke-width:2.4;color:#2b3342" width="12" height="12" viewBox="0 0 24 24"><path d="m21 21-6-6m6 6v-4.8m0 4.8h-4.8M3 16.2V21m0 0h4.8M3 21l6-6M21 7.8V3m0 0h-4.8M21 3l-6 6M3 7.8V3m0 0h4.8M3 3l6 6"/></svg>

<!-- nodes -->
<div class="node ny" style="left:1746px;top:343px">Input</div>
<div class="dur" style="right:288px;top:412px;font-size:12.4px">0.651s</div>
<div class="node ng" style="left:1746px;top:427px">f/scripts/create_actor_webhook<div class="badge" style="left:250px">a</div></div>
<svg class="ic" style="left:1754px;top:436px;stroke-width:1.9;color:#2b3342" width="15" height="16" viewBox="0 0 24 24"><rect width="16" height="20" x="4" y="2" rx="2"/><path d="M9 22v-4h6v4M8 6h.01M16 6h.01M12 6h.01M12 10h.01M12 14h.01M16 10h.01M16 14h.01M8 10h.01M8 14h.01"/></svg>
<div class="dur" style="right:288px;top:496px;font-size:12.4px">0.867s</div>
<div class="node ng" style="left:1746px;top:511px">Run one branch<div class="badge" style="left:250px">b</div></div>
<svg class="ic" style="left:1754.5px;top:519.5px;stroke-width:2;color:#2b3342" width="16" height="16" viewBox="0 0 24 24"><circle cx="18" cy="6" r="3"/><circle cx="6" cy="18" r="3"/><path d="M6 3v12M18 9a9 9 0 0 1-9 9"/></svg>

<div class="node ny" style="left:1584px;top:595px">Default</div>
<div class="node ny nb" style="left:1909px;top:595px">If is webhook trigger result</div>
<div class="dur" style="right:125px;top:664px;font-size:12.4px">0.544s</div>
<div class="node ng" style="left:1909px;top:679px">f/scripts/get_dataset_items<div class="badge" style="left:250px">c</div></div>
<svg class="ic" style="left:1917px;top:688px;stroke-width:1.9;color:#2b3342" width="15" height="16" viewBox="0 0 24 24"><rect width="16" height="20" x="4" y="2" rx="2"/><path d="M9 22v-4h6v4M8 6h.01M16 6h.01M12 6h.01M12 10h.01M12 14h.01M16 10h.01M16 14h.01M8 10h.01M8 14h.01"/></svg>
<div class="t" style="left:1909px;top:745.5px;font-size:18.8px;color:#3a4150">Iteration: 2/2</div>
<div class="node ng" style="left:1909px;top:763px">For loop (skip failures)<div class="badge" style="left:250px">e</div></div>
<svg class="ic" style="left:1917px;top:772px;stroke-width:2;color:#2b3342" width="16" height="16" viewBox="0 0 24 24"><path d="m17 2 4 4-4 4"/><path d="M3 11v-1a4 4 0 0 1 4-4h14"/><path d="m7 22-4-4 4-4"/><path d="M21 13v1a4 4 0 0 1-4 4H3"/></svg>
<div class="a" style="left:2108.5px;top:749.5px;width:39px;height:19px;background:#fff;border:1px solid #d6d9de;border-radius:3px"></div>
<div class="t b" style="left:2110.5px;top:753.5px;font-size:13px;color:#2b3342">#2</div>
<svg class="ic" style="left:2131px;top:753px;stroke-width:2.4;color:#2b3342" width="12" height="12" viewBox="0 0 24 24"><path d="M3 6h18M7 12h10M10 18h4"/></svg>

<div class="a" style="left:1567px;top:300px;width:632px;height:937px;overflow:hidden">
 <div class="node ny nb" style="left:392.3px;top:547px">Do one iteration</div>
 <div class="node ng" style="left:392.3px;top:631.3px">Process dataset item for an action</div>
 <div class="dur" style="left:629px;top:616px;font-size:12.4px">0.6s</div>
</div>
<div class="a" style="left:1968px;top:941px;width:15px;height:14px;background:#3a6fc8"></div>
<div class="t b" style="left:1970px;top:946px;font-size:8px;color:#fff;letter-spacing:-.3px">TS</div>
<div class="a" style="left:1977.5px;top:933px;width:12px;height:12px;border-radius:50%;background:#f3e6da;border:1.5px solid #fff;box-shadow:0 0 0 .6px #888"></div>
<div class="a" style="left:1980.5px;top:937px;width:1.5px;height:1.5px;border-radius:50%;background:#333"></div><div class="a" style="left:1984.5px;top:937px;width:1.5px;height:1.5px;border-radius:50%;background:#333"></div><div class="a" style="left:1982px;top:939.5px;width:3px;height:2px;border-radius:0 0 2px 2px;background:#d06a6a"></div>

<div class="node ny nb" style="left:1909px;top:1015px;text-indent:-35px">Collect result of each iteration<div class="badge" style="left:235px;width:29px;top:5px;height:22px;line-height:22px;text-indent:0">e</div></div>
<div class="node ny nb" style="left:1746px;top:1099px;text-indent:-35px">Collect result from chosen branch<div class="badge" style="left:235px;width:29px;top:5px;height:22px;line-height:22px;text-indent:0">b</div></div>
<div class="node ng" style="left:1746px;top:1183px">Result</div>

<!-- timeline -->
<div class="a" style="left:2199px;top:300px;width:1px;height:937px;background:#8f959e"></div>
<div class="t b" style="left:2219px;top:314px;font-size:16px;color:#3a4456">Timeline</div>
<div class="a" style="left:2200px;top:337px;width:101px;height:2px;background:#2b3342"></div>
<div class="a" style="left:2200px;top:339px;width:108px;height:1px;background:#e3e5ea"></div>
<div class="a" style="left:2201px;top:344.5px;width:120px;height:7px;border-radius:4px;background:#b4b4b4"></div>
<div class="a" style="left:2200px;top:354px;width:108px;height:1px;background:#e3e5ea"></div>
<div class="t" style="left:2242.5px;top:371px;font-size:13px;color:#2b3342">17/09, 14:3</div>
<div class="a" style="left:2200px;top:396px;width:108px;height:1px;background:#e3e5ea"></div>
<div class="t" style="left:2209.5px;top:411px;font-size:13.3px;color:#2b3342">Waiting for execu</div>
<div class="t" style="left:2209.5px;top:432.6px;font-size:13.3px;color:#2b3342">Suspend</div>
<div class="a" style="left:2200px;top:460px;width:108px;height:1px;background:#e3e5ea"></div>
<div class="t" style="left:2209.5px;top:474.8px;font-size:18px;color:#222a38">a</div>
<div class="a" style="left:2286px;top:479px;width:30px;height:18px;border-radius:3px;background:#5b81ec"></div><div class="t b" style="left:2302px;top:482px;font-size:12px;color:#fff">0.65s</div>
<div class="a" style="left:2200px;top:515px;width:108px;height:1px;background:#e3e5ea"></div>
<div class="t" style="left:2209.5px;top:529.8px;font-size:18px;color:#222a38">b</div>
<div class="a" style="left:2200px;top:570.5px;width:108px;height:1px;background:#e3e5ea"></div>
<div class="t" style="left:2209.5px;top:584.8px;font-size:18px;color:#222a38">c</div>
<div class="a" style="left:2200px;top:625px;width:108px;height:1px;background:#e3e5ea"></div>
<div class="t" style="left:2209.5px;top:639.8px;font-size:18px;color:#222a38">e</div>
<div class="a" style="left:2200px;top:707px;width:108px;height:1px;background:#e3e5ea"></div>
<div class="t" style="left:2209.5px;top:721.8px;font-size:18px;color:#222a38">d</div>
<div class="a" style="left:2200px;top:789px;width:108px;height:1px;background:#e3e5ea"></div>
</body></html>
